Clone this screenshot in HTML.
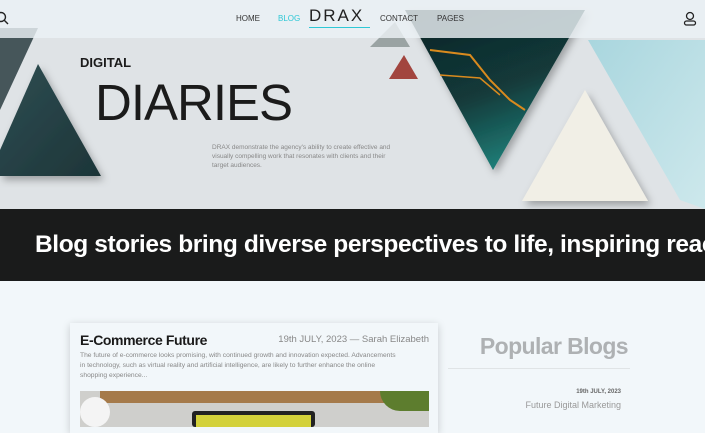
<!DOCTYPE html>
<html><head><meta charset="utf-8"><style>
*{margin:0;padding:0;box-sizing:border-box}
body{width:705px;height:427px;overflow:hidden;background:#f2f7fa;font-family:"Liberation Sans",sans-serif;position:relative}
.a{position:absolute}
</style></head><body>
<div class="a" style="left:0;top:0;width:705px;height:209px;background:#dfe3e6"></div>
<svg class="a" style="left:0;top:0" width="705" height="209">
<defs>
<linearGradient id="t" x1="0" y1="0" x2="1" y2="1"><stop offset="0" stop-color="#2e4d52"/><stop offset="1" stop-color="#1d3538"/></linearGradient>
<linearGradient id="d" x1="0" y1="0" x2="0.4" y2="1"><stop offset="0" stop-color="#0f2225"/><stop offset="0.6" stop-color="#123a3a"/><stop offset="1" stop-color="#1f7a74"/></linearGradient>
<linearGradient id="b" x1="0" y1="0" x2="1" y2="1"><stop offset="0" stop-color="#a9d6de"/><stop offset="1" stop-color="#cde8ec"/></linearGradient>
<filter id="s"><feDropShadow dx="3" dy="4" stdDeviation="4" flood-opacity="0.3"/></filter>
</defs>
<polygon points="0,28 38,28 0,110" fill="#46565a"/>
<polygon points="38,64 0,150 0,176 101,176" fill="url(#t)" filter="url(#s)"/>
<polygon points="588,40 705,40 705,209 680,200" fill="url(#b)"/>
<polygon points="405,10 585,10 493,170" fill="url(#d)" filter="url(#s)"/>
<path d="M430 50 L470 55 L490 80 L510 100 L525 110" stroke="#d98a1e" stroke-width="2" fill="none"/>
<path d="M440 75 L480 78 L500 95" stroke="#d98a1e" stroke-width="1.5" fill="none"/>
<polygon points="585,90 522,201 648,201" fill="#f1efe6" filter="url(#s)"/>
<polygon points="395,22 370,47 410,47" fill="#9aa3a3"/>
<polygon points="404,55 389,79 418,79" fill="#a2453f"/>
</svg>
<div class="a" style="left:0;top:0;width:705px;height:38px;background:rgba(236,241,245,0.82)"></div>
<svg class="a" style="left:0;top:11" width="10" height="14"><circle cx="1" cy="6" r="4.5" stroke="#222" stroke-width="1.4" fill="none"/><line x1="4" y1="9" x2="8" y2="13" stroke="#222" stroke-width="1.4"/></svg>
<svg class="a" style="left:683;top:11" width="14" height="15"><circle cx="7" cy="5" r="3.5" stroke="#222" stroke-width="1.3" fill="none"/><rect x="1.5" y="10" width="11" height="4" rx="2" stroke="#222" stroke-width="1.3" fill="none"/></svg>
<div class="a" style="left:236px;top:14px;font-size:8px;color:#333">HOME</div>
<div class="a" style="left:278px;top:14px;font-size:8px;color:#2ec8d6">BLOG</div>
<div class="a" style="left:309px;top:6px;font-size:17px;letter-spacing:2px;color:#222">DRAX</div>
<div class="a" style="left:309px;top:27px;width:61px;height:1px;background:#2ec8d6"></div>
<div class="a" style="left:380px;top:14px;font-size:8px;color:#333">CONTACT</div>
<div class="a" style="left:437px;top:14px;font-size:8px;color:#333">PAGES</div>
<div class="a" style="left:80px;top:55px;font-size:13px;font-weight:bold;color:#1b1b1b">DIGITAL</div>
<div class="a" style="left:95px;top:77px;font-size:51px;color:#1b1b1b;letter-spacing:-1px;line-height:1">DIARIES</div>
<div class="a" style="left:212px;top:143px;width:185px;font-size:6.5px;line-height:9px;color:#888">DRAX demonstrate the agency's ability to create effective and visually compelling work that resonates with clients and their target audiences.</div>
<div class="a" style="left:0;top:209px;width:705px;height:72px;background:#1a1b1b;overflow:hidden">
<div class="a" style="left:35px;top:22px;font-size:24.5px;font-weight:bold;color:#fff;white-space:nowrap;letter-spacing:-0.4px">Blog stories bring diverse perspectives to life, inspiring reac</div>
</div>
<div class="a" style="left:70px;top:323px;width:368px;height:110px;background:#f2f7fa;box-shadow:0 2px 8px rgba(0,0,0,0.18)"></div>
<div class="a" style="left:80px;top:332px;font-size:14px;font-weight:bold;color:#1a1a1a;letter-spacing:-0.4px">E-Commerce Future</div>
<div class="a" style="left:262px;top:334px;width:167px;text-align:right;font-size:9.5px;color:#888">19th JULY, 2023 — Sarah Elizabeth</div>
<div class="a" style="left:80px;top:351px;width:320px;font-size:6.7px;line-height:10px;color:#888">The future of e-commerce looks promising, with continued growth and innovation expected. Advancements in technology, such as virtual reality and artificial intelligence, are likely to further enhance the online shopping experience...</div>
<div class="a" style="left:80px;top:391px;width:349px;height:36px;background:#cfcfcc;overflow:hidden">
<div class="a" style="left:20px;top:0;width:329px;height:12px;background:#a57a4a"></div>
<div class="a" style="left:0;top:6px;width:30px;height:30px;border-radius:50%;background:#f4f4f4"></div>
<div class="a" style="left:112px;top:20px;width:123px;height:16px;background:#222;border-radius:3px"></div>
<div class="a" style="left:116px;top:24px;width:115px;height:12px;background:#d3d13a"></div>
<div class="a" style="left:300px;top:0;width:49px;height:20px;background:#5d7d2e;border-radius:0 0 0 20px"></div>
</div>
<div class="a" style="left:420px;top:333px;width:208px;text-align:right;font-size:23px;font-weight:bold;color:#aeb1b3;letter-spacing:-0.6px">Popular Blogs</div>
<div class="a" style="left:448px;top:368px;width:182px;height:1px;background:#e0e4e6"></div>
<div class="a" style="left:480px;top:389px;width:141px;text-align:right;font-size:6px;font-weight:bold;color:#666">19th JULY, 2023</div>
<div class="a" style="left:440px;top:400px;width:181px;text-align:right;font-size:9px;color:#999">Future Digital Marketing</div>
</body></html>
